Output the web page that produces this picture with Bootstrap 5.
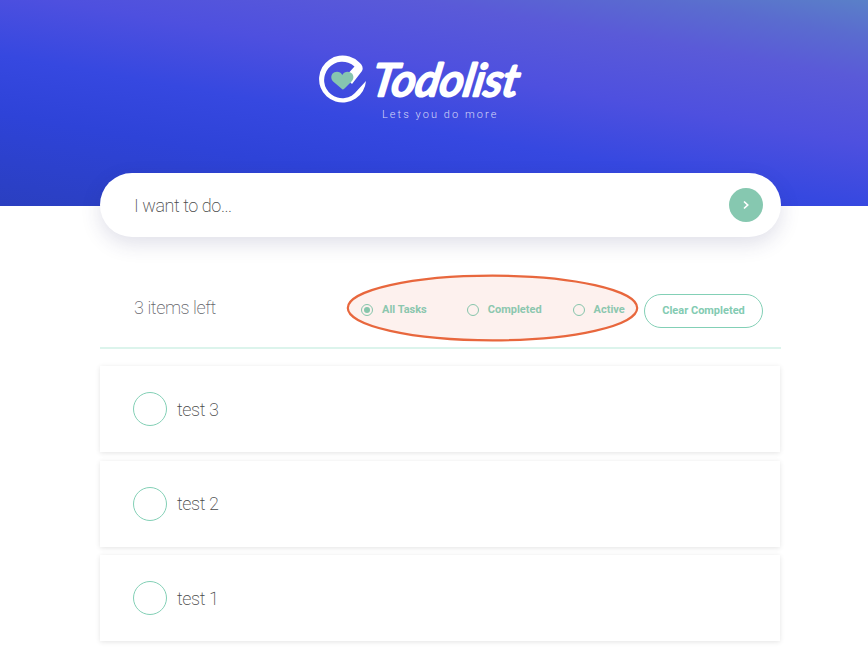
<!DOCTYPE html>
<html lang="en">
<head>
<meta charset="utf-8">
<meta name="viewport" content="width=device-width, initial-scale=1">
<title>Todolist</title>
<link href="https://cdn.jsdelivr.net/npm/bootstrap@5.3.0/dist/css/bootstrap.min.css" rel="stylesheet">
<style>
  body { font-family: Roboto, "Liberation Sans", sans-serif; font-weight: 300; background: #fff; color: #4c4c4c; overflow: hidden; min-height: 100vh; }
  .hero { height: 206px; padding-top: 48px; background: linear-gradient(10deg, #2a3fc0 0%, #2e43d8 26%, #3648e0 42%, #4e50df 60%, #5a5ad8 78%, #5a6ccf 90%, #5a80c8 100%); }
  .brand-row { width: 214px; margin-left: 319px; }
  .brand-name { font-family: Lato, sans-serif; font-style: italic; font-weight: 400; stroke: #fff; stroke-width: 2.6; stroke-linejoin: round; }
  .tagline { margin-left: 382px; margin-top: -4px; font-size: 11px; line-height: 14px; letter-spacing: 2.06px; color: #d6d8f8; }
  .page { width: 681px; margin-left: 100px; margin-top: -33px; }
  .entry { height: 64px; padding-left: 34px; padding-right: 18px; box-shadow: 0 7px 20px rgba(50, 50, 110, .15); }
  .entry input, .count, .task { font-size: 18px; font-weight: 200; letter-spacing: -.42px; }
  .entry input, .entry input:focus { color: #4a4a4a; }
  .entry input::placeholder { color: #4a4a4a; opacity: 1; }
  .go { width: 34px; height: 34px; background: #86c8b0; }
  .toolbar { height: 112px; padding: 57px 18px 0 34px; border-bottom: 2px solid #dcf4ec; }
  .count { line-height: 28px; color: #66666c; width: 227px; }
  .filters { height: 32px; font-size: 11px; font-weight: 700; color: #8cc7ae; }
  .filter-item { gap: 9px; line-height: 32px; }
  .filter-wide { width: 105.8px; }
  .dot { width: 12px; height: 12px; border: 1px solid #86c5ab; }
  .dot.on::after { content: ""; width: 6px; height: 6px; border-radius: 50%; background: #86c5ab; }
  .clear { width: 119px; height: 34px; border: 1px solid #83d0b6; color: #83cbb2; font-size: 11px; font-weight: 700; padding: 0; }
  .ring { left: 246px; top: 36px; }
  .tasks { width: 680px; padding-top: 17px; gap: 8.5px; }
  .task { height: 86px; padding-left: 33px; gap: 10px; color: #4a4a4a; box-shadow: 0 1px 5px rgba(0, 0, 0, .11); }
  .check { width: 34px; height: 34px; border: 1px solid #83d0b6; }
</style>
</head>
<body>
<header class="hero">
  <div class="brand-row d-flex">
    <svg width="214" height="64" viewBox="0 -6 214 64">
      <path d="M47 27A23.5 23.5 0 1 1 39.5 7.8C42.8 10 44.8 14 43 17L33 30 26 23 35.5 12.5A18.2 18.2 0 1 0 38 36.8Z" fill="#fff"/>
      <path d="M23.3 35.2 14.1 27.4C11.1 24.5 12 19.7 15.4 18.3 18.4 17 21.7 18 23.3 20.9 25 18 28.2 17 31 18.3 34.7 19.7 35.7 24.5 32.5 27.4L26 34Q24.5 36 23.3 35.2Z" fill="#86c5b0"/>
      <text class="brand-name" transform="translate(51 42) skewX(-10)" x="0" y="0" font-size="45" fill="#fff" textLength="147" lengthAdjust="spacingAndGlyphs">Todolist</text>
    </svg>
  </div>
  <div class="tagline">Lets you do more</div>
</header>
<main class="page position-relative">
  <form class="entry d-flex align-items-center bg-white rounded-pill">
    <input class="form-control border-0 shadow-none bg-transparent p-0" type="text" placeholder="I want to do...">
    <button class="go btn border-0 rounded-circle p-0 d-flex align-items-center justify-content-center flex-shrink-0" type="button" aria-label="Add">
      <svg width="8" height="10" viewBox="0 0 8 10"><path d="M2 1.5 5.7 5 2 8.5" fill="none" stroke="#fff" stroke-width="1.7"/></svg>
    </button>
  </form>
  <section class="toolbar d-flex position-relative">
    <svg class="ring position-absolute" width="294" height="70" viewBox="0 0 294 70"><ellipse cx="146.5" cy="35" rx="144.7" ry="32.3" fill="#fdf1ee" stroke="#e8673d" stroke-width="2.2"/></svg>
    <div class="count">3 items left</div>
    <div class="filters d-flex position-relative">
      <div class="filter-item filter-wide d-flex align-items-center"><span class="dot on rounded-circle d-flex align-items-center justify-content-center"></span>All Tasks</div>
      <div class="filter-item filter-wide d-flex align-items-center"><span class="dot rounded-circle"></span>Completed</div>
      <div class="filter-item d-flex align-items-center"><span class="dot rounded-circle"></span>Active</div>
    </div>
    <button class="clear btn rounded-pill ms-auto" type="button">Clear Completed</button>
  </section>
  <section class="tasks d-flex flex-column">
    <div class="task d-flex align-items-center bg-white"><span class="check rounded-circle"></span>test 3</div>
    <div class="task d-flex align-items-center bg-white"><span class="check rounded-circle"></span>test 2</div>
    <div class="task d-flex align-items-center bg-white"><span class="check rounded-circle"></span>test 1</div>
  </section>
</main>
<script src="https://cdn.jsdelivr.net/npm/bootstrap@5.3.0/dist/js/bootstrap.bundle.min.js"></script>
</body>
</html>
